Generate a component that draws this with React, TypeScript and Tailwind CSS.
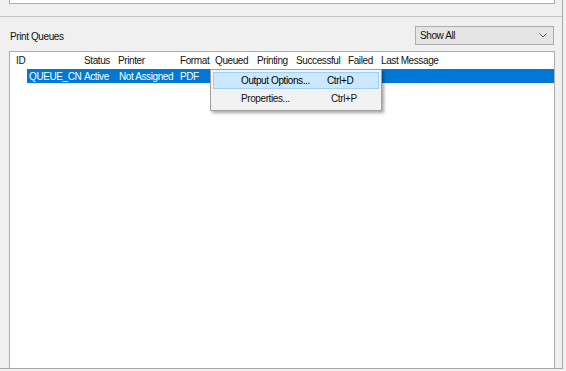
const columns = [
  { label: 'ID', width: 'w-[70px]', pad: 'pl-[6px]' },
  { label: 'Status', width: 'w-[34px]', pad: 'pl-[4px]' },
  { label: 'Printer', width: 'w-[62px]', pad: 'pl-[4px]' },
  { label: 'Format', width: 'w-[35px]', pad: 'pl-[4px]' },
  { label: 'Queued', width: 'w-[42px]', pad: 'pl-[4px]' },
  { label: 'Printing', width: 'w-[39px]', pad: 'pl-[4px]' },
  { label: 'Successful', width: 'w-[52px]', pad: 'pl-[4px]' },
  { label: 'Failed', width: 'w-[33px]', pad: 'pl-[4px]' },
  { label: 'Last Message', width: 'w-[120px]', pad: 'pl-[4px]' },
]

function ContextMenu() {
  return (
    <div className="absolute left-[210px] top-[69px] w-[172px] h-[42px] bg-[#f2f2f2] border border-[#a0a0a0] shadow-[2px_2px_3px_rgba(0,0,0,0.35)] p-[2px] flex flex-col">
      <div className="h-[18px] flex items-center bg-[#cce8ff] border border-[#99d1ff] text-[#000] whitespace-nowrap">
        <span className="pl-[27px] w-[113px]">Output Options...</span>
        <span>Ctrl+D</span>
      </div>
      <div className="h-[20px] flex items-center border border-transparent whitespace-nowrap">
        <span className="pl-[27px] w-[117px]">Properties...</span>
        <span>Ctrl+P</span>
      </div>
    </div>
  )
}

export default function App() {
  return (
    <div
      className="w-[566px] h-[371px] bg-[#f0f0f0] overflow-hidden relative text-[10px] tracking-[-0.4px] text-[#111]"
      style={{ fontFamily: '"Liberation Sans", Arial, sans-serif' }}
    >
      <div className="w-[563px] h-[369px] border-r border-b border-[#a8a8a8] flex flex-col">
        {/* top pane remains */}
        <div className="h-[17px] border-b border-[#c4c4c4]">
          <div className="ml-[9px] w-[546px] h-[4px] bg-white border border-t-0 border-[#adadad]" />
        </div>

        {/* header bar */}
        <div className="h-[34px] flex items-start justify-between pl-[10px] pr-[8px] pt-[9px]">
          <span className="pt-[3px]">Print Queues</span>
          <div className="w-[139px] h-[19px] bg-[#e5e5e5] border border-[#adadad] flex items-center justify-between pl-[4px] pr-[6px]">
            <span>Show All</span>
            <svg width="8" height="5" viewBox="0 0 8 5" fill="none" stroke="#606060" strokeWidth="1">
              <path d="M0.5 0.5 L4 4 L7.5 0.5" />
            </svg>
          </div>
        </div>

        {/* list view */}
        <div className="ml-[9px] w-[546px] flex-1 bg-white border border-b-0 border-[#adadad] flex flex-col">
          <div className="h-[17px] flex items-center">
            {columns.map((c) => (
              <div key={c.label} className={`${c.width} ${c.pad} whitespace-nowrap`}>
                {c.label}
              </div>
            ))}
          </div>
          <div className="h-[14px] ml-[17px] bg-[#0078d7] text-white flex items-center whitespace-nowrap">
            <div className="w-[57px] pl-[2px]">QUEUE_CN</div>
            <div className="w-[35px]">Active</div>
            <div className="w-[61px]">Not Assigned</div>
            <div className="w-[35px]">PDF</div>
          </div>
        </div>
      </div>

      <ContextMenu />
    </div>
  )
}
